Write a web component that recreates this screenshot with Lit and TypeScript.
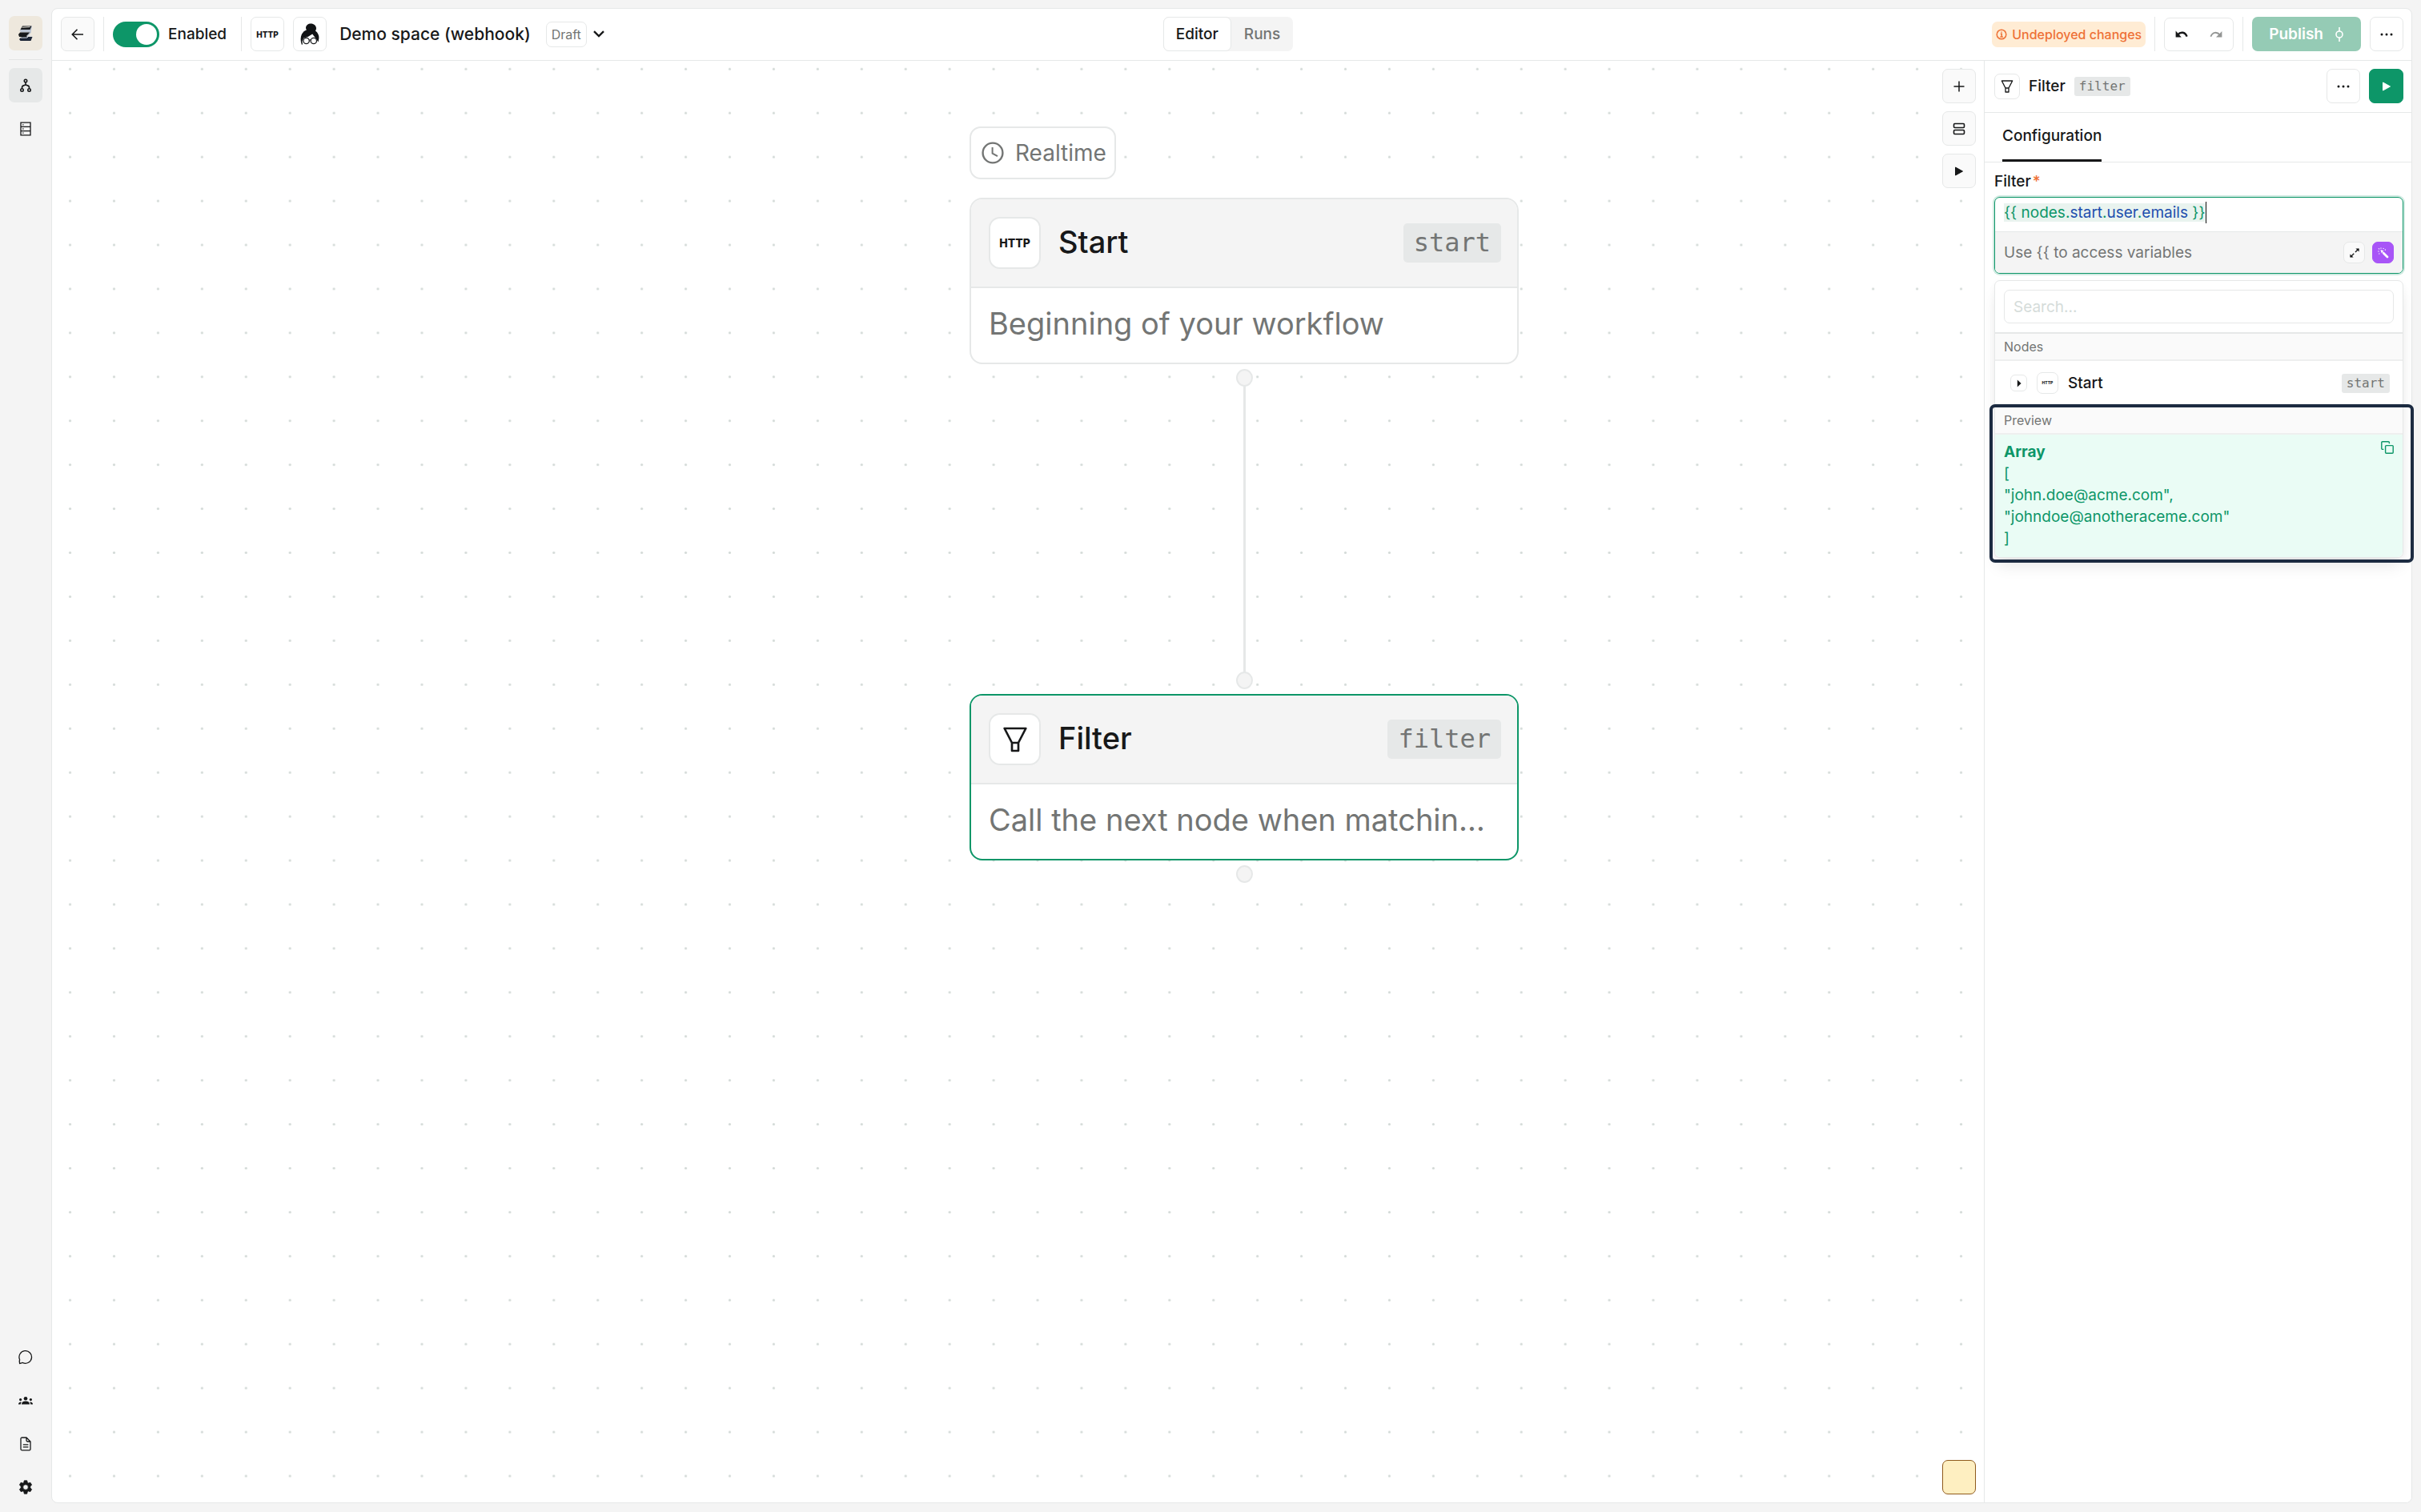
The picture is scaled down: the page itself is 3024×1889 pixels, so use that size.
import { LitElement, html, svg, css, TemplateResult } from "lit";
import { customElement, property, state } from "lit/decorators.js";
import { classMap } from "lit/directives/class-map.js";

/* ---------- icons ---------- */

const draw = (w: number, h: number, body: TemplateResult) => html`
  <svg width=${w} height=${h} viewBox="0 0 ${w} ${h}" fill="none" stroke="currentColor" aria-hidden="true">${body}</svg>
`;

const icons = {
  logo: () => draw(18, 20, svg`<g stroke="none">
    <path d="M5 1 17 0.5 15.5 8.5H3.5L1.5 6.5Z" fill="#b9c3d2"/>
    <path d="M5 0.5H16.5L14.5 5H2.5Z" fill="#17191c"/>
    <path d="M4.5 2.2 14.5 1.6" stroke="#e8e4da" stroke-width="1"/>
    <path d="M2 8.5H15L10.5 14H1L0 11Z" fill="#17191c"/>
    <path d="M10.5 13.5 15.5 8" stroke="#b9c3d2" stroke-width="1.2"/>
    <path d="M4 14H17.5L15.5 19H2.5L1 17Z" fill="#1c2536"/>
    <path d="M3 15.2 11 15 12.5 13.2 17 13" stroke="#d8dce2" stroke-width="1"/></g>`),
  branch: () => draw(14, 18, svg`<g stroke-width="1.6">
    <circle cx="7" cy="3" r="1.7"/><circle cx="2.5" cy="14.5" r="1.7"/><circle cx="11.5" cy="14.5" r="1.7"/>
    <path d="M7 5v3M2.5 12.5v-1Q2.5 9 5 8.6L7 8 9 8.6Q11.5 9 11.5 11.5v1"/></g>`),
  server: () => draw(14, 18, svg`<g stroke-width="1.3">
    <path d="M1 1.2H13V16.8H1ZM1 6.4H13M1 11.6H13"/><path d="M3.2 3.8h1.3M3.2 9h1.3M3.2 14.2h1.3"/></g>`),
  chat: () => draw(18, 18, svg`<path stroke-width="1.3" d="M1.6 16.4 1.2 13.2 Q1.8 12.4 1.5 11.4 A7.8 7.8 0 1 1 5.6 15.6 Q4.6 15.2 4 15.8 Z"/>`),
  people: () => draw(20, 12, svg`<g fill="currentColor" stroke="none">
    <circle cx="10" cy="3.2" r="2.3"/><circle cx="3.6" cy="4.6" r="1.6"/><circle cx="16.4" cy="4.6" r="1.6"/>
    <path d="M5 10.5Q5 6.6 10 6.6T15 10.5ZM1 10.5Q0.9 7.6 4.4 7.4L4.6 8Q3.8 9 3.8 10.5ZM19 10.5Q19.1 7.6 15.6 7.4L15.4 8Q16.2 9 16.2 10.5Z"/></g>`),
  file: () => draw(14, 18, svg`<g stroke-width="1.3">
    <path d="M2.6 1H8L13 6V15.4Q13 16.8 11.6 16.8H2.6Q1 16.8 1 15.2V2.6Q1 1 2.6 1ZM8 1V4.6Q8 6 9.4 6H13M3.8 9.8h6.6M3.8 12.8h6.6"/></g>`),
  gear: () => draw(18, 18, svg`<path fill="currentColor" stroke="currentColor" stroke-width="0.8" stroke-linejoin="round" fill-rule="evenodd" d="M7.3 0.8h3.4l.6 2.4 1.2.7 2.4-.7 1.7 2.9-1.8 1.8v2l1.8 1.8-1.7 2.9-2.4-.7-1.2.7-.6 2.6H7.3l-.6-2.6-1.2-.7-2.4.7L1.4 11.7l1.8-1.8V7.9L1.4 6.1l1.7-2.9 2.4.7 1.2-.7ZM9 5.7a3.3 3.3 0 1 0 0 6.6 3.3 3.3 0 0 0 0-6.6Z"/>`),
  back: () => draw(16, 14, svg`<path stroke-width="1.6" d="M1.5 7H15M7.5 0.8 1.3 7l6.2 6.2"/>`),
  chevron: () => draw(14, 9, svg`<path stroke-width="2.4" d="M1 1.2 7 7 13 1.2"/>`),
  persona: () => draw(24, 28, svg`<g>
    <path fill="#111315" stroke="none" d="M7 6C7 2.4 10 .4 13.4.4S20.2 2.8 20 6.6Q20 8.2 19 9.4C22.4 12 23.6 15.4 23.4 18.6L22.6 23.4Q19.4 18.6 15.2 13.4 10.6 17.2 4.4 18.4L2.4 22.6 3 26.6 1.8 26.8C.2 22 .2 17 2 13.4Q4 9.6 8 8.2 7 7.4 7 6Z"/>
    <g stroke="#1c1e20" stroke-width="1.3" fill="#fff"><circle cx="7.6" cy="22" r="3.7"/><circle cx="16.8" cy="22" r="3.7"/><path d="M11.2 21.4Q12.2 20.4 13.2 21.4"/></g></g>`),
  info: () => draw(14, 14, svg`<g stroke-width="1.5"><circle cx="7" cy="7" r="5.8"/><path d="M5.8 6.2H7.2V10M5.4 10H8.8M7 3.6v1.2"/></g>`),
  undo: () => draw(16, 10, svg`<g><path stroke-width="2.4" d="M3 5.6Q6 2.2 9.4 2.8 13 3.4 14.6 7.6"/><path fill="currentColor" stroke="none" d="M0.6 0.6V8.6H7.8Z"/></g>`),
  redo: () => draw(16, 10, svg`<g><path stroke-width="1.8" d="M13 5.6Q10 2.4 6.6 2.8 3 3.2 1.4 7.8"/><path fill="currentColor" stroke="none" d="M15.4 1V8.6H8Z"/></g>`),
  commit: () => draw(12, 20, svg`<g stroke-width="1.6"><circle cx="6" cy="10" r="4"/><path d="M6 1V6M6 14V19"/></g>`),
  dots: () => draw(16, 4, svg`<g fill="currentColor" stroke="none"><circle cx="2" cy="2" r="1.5"/><circle cx="8" cy="2" r="1.5"/><circle cx="14" cy="2" r="1.5"/></g>`),
  plus: () => draw(14, 14, svg`<path stroke-width="1.5" d="M7 .5V13.5M.5 7H13.5"/>`),
  rows: () => draw(16, 16, svg`<g stroke-width="1.6"><rect x="1.5" y="1.5" width="13" height="5" rx="1.2"/><rect x="1.5" y="9.5" width="13" height="5" rx="1.2"/></g>`),
  play: () => draw(12, 12, svg`<path fill="currentColor" stroke-width="1" stroke-linejoin="round" d="M1.5 1 10.5 6 1.5 11Z"/>`),
  playSmall: () => draw(6, 10, svg`<path fill="currentColor" stroke="none" d="M.8 0.5 5.6 5 .8 9.5Z"/>`),
  clock: () => draw(28, 28, svg`<g><circle cx="14" cy="14" r="12.4" stroke-width="2.4"/><path stroke-width="2" d="M13.6 7V14.6L20 18.2"/></g>`),
  expand: () => draw(12, 12, svg`<g><path stroke-width="1.3" stroke-dasharray="6 2.4" d="M1 11 11 1"/><path fill="currentColor" stroke="none" d="M7.4.6H11.6V4.6ZM.4 7.6V11.6H4.6Z"/></g>`),
  wand: () => draw(14, 14, svg`<g><path stroke-width="2.8" stroke-linecap="round" d="M7.2 7.2 12 12"/>
    <path fill="currentColor" stroke="none" d="M3.4 3 7.4 4.2 4.8 7.4Z"/>
    <path stroke-width="1.2" d="M4 .4v1.4M.2 5h1.4M1 1.4l1 1M7.4 1 6.8 2M1.4 8.4l.9-.8M8.8 3.2h1.2"/></g>`),
  copy: () => draw(16, 16, svg`<g stroke-width="1.4"><rect x="5.6" y="5.6" width="9.6" height="9.6" rx="1"/><path d="M3.4 10.4H2Q.8 10.4.8 9.2V2Q.8.8 2 .8H9.2Q10.4.8 10.4 2V3.2"/></g>`),
};

const funnel = (size: number) => html`
  <svg width=${size} height=${size} viewBox="0 0 24 24" fill="none" stroke="currentColor" stroke-width="2" stroke-linejoin="round" aria-hidden="true">
    <path d="M2 1.5H22L15 15V22.5H9V15ZM9 15H15" />
  </svg>
`;

/* ---------- shared styles ---------- */

const base = css`
  :host {
    --line: #e6e8e8;
    --ink: #171819;
    --muted: #737574;
    --soft: #f4f4f4;
    --pale: #fafafa;
    --green: #0d9668;
    font-family: Inter, "Liberation Sans", sans-serif;
    font-size: 19px;
    line-height: 27px;
    font-weight: 500;
    color: var(--ink);
  }
  *,
  *::before,
  *::after {
    box-sizing: border-box;
  }
  svg {
    display: block;
    flex: none;
  }
  button {
    font: inherit;
    color: inherit;
    padding: 0;
    margin: 0;
    border: 0;
    background: none;
    cursor: pointer;
  }
  .btn {
    display: flex;
    align-items: center;
    justify-content: center;
    width: 42px;
    height: 43px;
    border: 1px solid var(--line);
    border-radius: 7px;
    background: #fff;
    flex: none;
  }
  .btn.pale {
    background: var(--pale);
  }
  .tag {
    font-family: "DejaVu Sans Mono", "Liberation Mono", monospace;
    font-weight: 400;
    font-size: 16px;
    line-height: 24px;
    padding: 0 6px;
    border-radius: 3px;
    background: #e6e8e8;
    color: var(--muted);
  }
  .http {
    font-weight: 800;
    font-size: 10px;
    line-height: 1;
  }
`;

/* ---------- left rail ---------- */

@customElement("side-rail")
export class SideRail extends LitElement {
  static styles = [
    base,
    css`
      :host {
        display: flex;
        flex: none;
        width: 64px;
      }
      nav {
        display: flex;
        flex-direction: column;
        justify-content: space-between;
        flex: 1;
        padding: 20px 11px 10px;
      }
      .group {
        display: flex;
        flex-direction: column;
        gap: 11px;
      }
      .item {
        display: flex;
        align-items: center;
        justify-content: center;
        width: 42px;
        height: 43px;
        border-radius: 7px;
      }
      .item.active {
        background: #e6e8e8;
      }
      .item.logo {
        background: #eee8dd;
      }
      .rule {
        height: 1px;
        background: #e3e5e5;
        margin-bottom: -1px;
      }
    `,
  ];

  render() {
    const lower = [
      ["Chat", icons.chat],
      ["Team", icons.people],
      ["Documents", icons.file],
      ["Settings", icons.gear],
    ] as const;
    return html`
      <nav aria-label="Main">
        <div class="group">
          <button class="item logo" aria-label="Home">${icons.logo()}</button>
          <div class="rule"></div>
          <button class="item active" aria-label="Workflows">${icons.branch()}</button>
          <button class="item" aria-label="Storage">${icons.server()}</button>
        </div>
        <div class="group">
          ${lower.map(([label, icon]) => html`<button class="item" aria-label=${label}>${icon()}</button>`)}
        </div>
      </nav>
    `;
  }
}

/* ---------- header ---------- */

@customElement("top-bar")
export class TopBar extends LitElement {
  @state() private tab = "Editor";

  static styles = [
    base,
    css`
      :host {
        display: block;
        flex: none;
      }
      header {
        display: grid;
        grid-template-columns: 1fr auto 1fr;
        align-items: center;
        padding: 10px 10px 11px 11px;
        border-bottom: 1px solid var(--line);
      }
      .side {
        display: flex;
        align-items: center;
        gap: 11px;
      }
      .side.end {
        justify-content: flex-end;
      }
      .rule {
        width: 1px;
        height: 43px;
        background: var(--line);
      }
      .switch {
        display: flex;
        align-items: center;
        gap: 11px;
        padding-right: 7px;
      }
      .switch input {
        appearance: none;
        margin: 0;
        width: 58px;
        height: 32px;
        padding: 3px;
        border-radius: 16px;
        background: #c9cccb;
        display: flex;
      }
      .switch input::before {
        content: "";
        width: 26px;
        height: 26px;
        border-radius: 50%;
        background: #fff;
      }
      .switch input:checked {
        background: var(--green);
        justify-content: flex-end;
      }
      .title {
        margin: 0;
        padding: 0 8px 0 5px;
        font-size: 21px;
        font-weight: 500;
        line-height: 27px;
      }
      .draft {
        padding: 0 6px;
        border: 1px solid var(--line);
        border-radius: 7px;
        font-size: 16px;
        line-height: 30px;
        font-weight: 400;
        color: var(--muted);
      }
      .caret {
        padding: 4px 0;
        margin-left: -3px;
      }
      .tabs {
        display: flex;
        margin-right: 10px;
        border-radius: 7px;
        background: var(--soft);
      }
      .tabs button {
        height: 43px;
        padding: 0 15px;
        border: 1px solid transparent;
        border-radius: 7px;
        color: var(--muted);
      }
      .tabs button.on {
        background: #fff;
        border-color: var(--line);
        color: var(--ink);
      }
      .warn {
        display: flex;
        align-items: center;
        gap: 6px;
        padding: 0 5px;
        border-radius: 7px;
        background: #ffecd4;
        color: #ee7136;
        font-size: 16px;
        line-height: 32px;
      }
      .history {
        display: flex;
        align-items: center;
        height: 42px;
        width: 87px;
        border: 1px solid var(--line);
        border-radius: 7px;
      }
      .history button {
        display: flex;
        flex: 1;
        justify-content: center;
        padding: 12px 0;
      }
      .history .off {
        color: #939594;
      }
      .publish {
        display: flex;
        align-items: center;
        gap: 14px;
        height: 43px;
        padding: 0 21px;
        border-radius: 7px;
        background: #95cbb5;
        color: #fff;
        font-weight: 600;
      }
    `,
  ];

  render() {
    return html`
      <header>
        <div class="side">
          <button class="btn pale" aria-label="Back">${icons.back()}</button>
          <span class="rule"></span>
          <label class="switch"><input type="checkbox" role="switch" checked />Enabled</label>
          <span class="rule"></span>
          <span class="btn"><span class="http">HTTP</span></span>
          <span class="btn">${icons.persona()}</span>
          <h1 class="title">Demo space (webhook)</h1>
          <span class="draft">Draft</span>
          <button class="caret" aria-label="Choose version">${icons.chevron()}</button>
        </div>
        <div class="tabs" role="tablist">
          ${["Editor", "Runs"].map(
            (t) => html`<button
              role="tab"
              aria-selected=${this.tab === t}
              class=${classMap({ on: this.tab === t })}
              @click=${() => (this.tab = t)}
            >${t}</button>`
          )}
        </div>
        <div class="side end">
          <span class="warn">${icons.info()}Undeployed changes</span>
          <span class="rule"></span>
          <div class="history">
            <button aria-label="Undo">${icons.undo()}</button>
            <button class="off" aria-label="Redo">${icons.redo()}</button>
          </div>
          <span class="rule"></span>
          <button class="publish">Publish${icons.commit()}</button>
          <button class="btn" aria-label="More">${icons.dots()}</button>
        </div>
      </header>
    `;
  }
}

/* ---------- canvas ---------- */

@customElement("flow-node")
export class FlowNode extends LitElement {
  @property() heading = "";
  @property() slug = "";
  @property() text = "";
  @property() kind = "http";
  @property({ type: Boolean }) selected = false;

  static styles = [
    base,
    css`
      :host {
        display: block;
      }
      article {
        border: 2px solid var(--line);
        border-radius: 16px;
        background: #fff;
        overflow: hidden;
      }
      article.selected {
        border-color: var(--green);
      }
      .head {
        display: flex;
        align-items: center;
        gap: 22px;
        padding: 22px 20px 22px 22px;
        background: var(--soft);
        border-bottom: 2px solid var(--line);
      }
      .box {
        display: flex;
        align-items: center;
        justify-content: center;
        width: 65px;
        height: 65px;
        border: 2px solid var(--line);
        border-radius: 14px;
        background: #fff;
      }
      .box .http {
        font-size: 14px;
      }
      h2 {
        flex: 1;
        margin: 0;
        padding-bottom: 4px;
        font-size: 38px;
        line-height: 54px;
        font-weight: 500;
      }
      .slug {
        font-size: 32px;
        line-height: 49px;
        padding: 0 13px;
        border-radius: 5px;
      }
      p {
        margin: 0;
        padding: 17px 22px 22px;
        font-size: 38px;
        line-height: 54px;
        font-weight: 400;
        color: var(--muted);
      }
    `,
  ];

  render() {
    return html`
      <article class=${classMap({ selected: this.selected })}>
        <div class="head">
          <span class="box">${this.kind === "http" ? html`<span class="http">HTTP</span>` : funnel(32)}</span>
          <h2>${this.heading}</h2>
          <code class="tag slug">${this.slug}</code>
        </div>
        <p>${this.text}</p>
      </article>
    `;
  }
}

@customElement("flow-canvas")
export class FlowCanvas extends LitElement {
  static styles = [
    base,
    css`
      :host {
        display: flex;
        flex: 1;
        position: relative;
        overflow: hidden;
        min-width: 0;
      }
      .grid {
        position: absolute;
        inset: 0;
        width: 100%;
        height: 100%;
      }
      .realtime,
      .node,
      .edge,
      .port {
        position: absolute;
      }
      .realtime {
        left: 1146px;
        top: 82px;
        display: flex;
        align-items: center;
        gap: 14px;
        padding: 4px 10px 4px 13px;
        border: 2px solid var(--line);
        border-radius: 14px;
        background: #fff;
        color: var(--muted);
        font-size: 28px;
        line-height: 54px;
        font-weight: 400;
      }
      .node {
        left: 1146px;
        width: 686px;
      }
      .node.start {
        top: 171px;
      }
      .node.filter {
        top: 791px;
      }
      .edge {
        left: 1488px;
        top: 406px;
        width: 3px;
        height: 358px;
        background: var(--line);
      }
      .port {
        left: 1479px;
        width: 21px;
        height: 22px;
        border: 2px solid var(--line);
        border-radius: 50%;
        background: var(--soft);
      }
      .port.a {
        top: 385px;
      }
      .port.b {
        top: 763px;
      }
      .port.c {
        top: 1005px;
      }
      .tools {
        position: relative;
        display: flex;
        flex-direction: column;
        gap: 10px;
        margin-left: auto;
        padding: 10px;
      }
      .tools .note {
        margin-top: auto;
        background: #feefc1;
        border-color: #8f5a1c;
      }
    `,
  ];

  render() {
    return html`
      <svg class="grid" aria-hidden="true">
        <defs>
          <pattern id="dots" width="54.93" height="54.93" patternUnits="userSpaceOnUse" x="-4.9" y="-17.2">
            <circle cx="27.46" cy="27.46" r="1.6" fill="#d3dad7" />
          </pattern>
        </defs>
        <rect width="100%" height="100%" fill="url(#dots)" />
      </svg>
      <div class="realtime">${icons.clock()}Realtime</div>
      <flow-node class="node start" heading="Start" slug="start" kind="http" text="Beginning of your workflow"></flow-node>
      <flow-node
        class="node filter"
        heading="Filter"
        slug="filter"
        kind="filter"
        text="Call the next node when matchin…"
        selected
      ></flow-node>
      <span class="edge"></span>
      <span class="port a"></span>
      <span class="port b"></span>
      <span class="port c"></span>
      <div class="tools">
        <button class="btn pale" aria-label="Add node">${icons.plus()}</button>
        <button class="btn pale" aria-label="Arrange">${icons.rows()}</button>
        <button class="btn pale" aria-label="Run">${icons.play()}</button>
        <button class="btn note" aria-label="Add note"></button>
      </div>
    `;
  }
}

/* ---------- right panel ---------- */

@customElement("config-panel")
export class ConfigPanel extends LitElement {
  static styles = [
    base,
    css`
      :host {
        display: block;
        flex: none;
        width: 534px;
        border-left: 1px solid var(--line);
        background: #fff;
      }
      .head {
        display: flex;
        align-items: center;
        gap: 11px;
        padding: 10px 10px 11px 12px;
        border-bottom: 1px solid var(--line);
      }
      .head .icon {
        width: 32px;
        height: 32px;
      }
      h2 {
        margin: 0;
        font-size: 19px;
        font-weight: 500;
      }
      .end {
        display: flex;
        gap: 11px;
        margin-left: auto;
      }
      .run {
        background: var(--green);
        border-color: var(--green);
        color: #fff;
        width: 43px;
      }
      .tabs {
        display: flex;
        padding: 0 22px;
        border-bottom: 1px solid var(--line);
      }
      .tabs button {
        padding: 15px 0 16px;
        border-bottom: 3px solid var(--ink);
      }
      .body {
        padding: 10px 10px 10px 12px;
      }
      .label {
        display: block;
        margin-bottom: 6px;
      }
      .label em {
        font-style: normal;
        color: #ee7136;
        margin-left: 2px;
      }
      .field {
        border: 1px solid var(--green);
        border-radius: 7px;
        box-shadow: 0 0 0 2px #0d966833;
        overflow: hidden;
      }
      .code {
        padding: 5px 11px 10px;
        font-weight: 400;
        color: var(--green);
        outline: none;
        border-bottom: 1px solid var(--line);
      }
      .code .expr {
        background: #e9f3ef;
      }
      .code b {
        font-weight: 400;
        color: #1d4fae;
      }
      .code .cursor {
        display: inline-block;
        width: 1px;
        height: 27px;
        background: #111;
        vertical-align: top;
      }
      .hint {
        display: flex;
        align-items: center;
        gap: 9px;
        padding: 12px 11px;
        background: var(--soft);
        color: var(--muted);
        font-weight: 400;
      }
      .hint span {
        margin-right: auto;
      }
      .mini {
        width: 27px;
        height: 27px;
      }
      .hint .mini {
        color: var(--ink);
      }
      .hint .mini.magic {
        background: #a855f7;
        border-color: #a855f7;
        color: #fff;
      }
      .pop {
        margin-top: 8px;
        border: 1px solid var(--line);
        border-radius: 7px;
        box-shadow: 0 13px 20px -4px #0000001a, 0 2px 8px #00000008;
        background: #fff;
      }
      .search {
        padding: 11px;
        border-bottom: 2px solid var(--line);
      }
      .search input {
        display: block;
        width: 100%;
        height: 42px;
        padding: 0 11px;
        border: 1px solid var(--line);
        border-radius: 7px;
        font: inherit;
        font-weight: 400;
        outline: none;
      }
      .search input::placeholder {
        color: #d5dcda;
        opacity: 1;
      }
      .band {
        margin: 0;
        padding: 0 11px;
        font-size: 16px;
        line-height: 32px;
        font-weight: 400;
        color: var(--muted);
        background: var(--pale);
        border-bottom: 2px solid #eeefef;
      }
      .row {
        display: flex;
        align-items: center;
        padding: 14px 16px 17px 19px;
        gap: 12px;
      }
      .row .open {
        width: 21px;
        height: 21px;
        border-radius: 6px;
      }
      .row .http {
        font-size: 5px;
      }
      .row .tag {
        margin-left: auto;
      }
      .preview {
        position: relative;
      }
      .preview::after {
        content: "";
        position: absolute;
        inset: -4px -14px -7px -7px;
        border: 4px solid #1c2b41;
        border-radius: 7px;
        pointer-events: none;
      }
      .value {
        display: flex;
        justify-content: space-between;
        align-items: flex-start;
        padding: 8px 11px 10px;
        border-radius: 0 0 7px 7px;
        background: #eafcf5;
        color: var(--green);
      }
      .value pre {
        margin: 0;
        font: inherit;
        font-weight: 400;
      }
      .value strong {
        font-weight: 700;
      }
    `,
  ];

  private get value() {
    return ["[", '"john.doe@acme.com",', '"johndoe@anotheraceme.com"', "]"].join("\n");
  }

  render() {
    return html`
      <div class="head">
        <span class="btn icon">${funnel(16)}</span>
        <h2>Filter</h2>
        <code class="tag">filter</code>
        <div class="end">
          <button class="btn" aria-label="More">${icons.dots()}</button>
          <button class="btn run" aria-label="Run node">${icons.play()}</button>
        </div>
      </div>
      <div class="tabs" role="tablist">
        <button role="tab" aria-selected="true">Configuration</button>
      </div>
      <div class="body">
        <span class="label" id="filter-label">Filter<em>*</em></span>
        <div class="field">
          <div class="code" role="textbox" contenteditable="true" spellcheck="false" aria-labelledby="filter-label"><span class="expr">{{ nodes.<b>start</b>.<b>user</b>.<b>emails</b> }}</span><span class="cursor"></span></div>
          <div class="hint">
            <span>Use {{ to access variables</span>
            <button class="btn mini pale" aria-label="Expand">${icons.expand()}</button>
            <button class="btn mini magic" aria-label="Generate">${icons.wand()}</button>
          </div>
        </div>
        <div class="pop">
          <div class="search"><input type="search" placeholder="Search..." aria-label="Search" /></div>
          <h3 class="band">Nodes</h3>
          <div class="row">
            <button class="btn open" aria-label="Show fields">${icons.playSmall()}</button>
            <span class="btn mini"><span class="http">HTTP</span></span>
            <span>Start</span>
            <code class="tag">start</code>
          </div>
          <section class="preview">
            <h3 class="band">Preview</h3>
            <div class="value">
              <div><strong>Array</strong><pre>${this.value}</pre></div>
              <button aria-label="Copy">${icons.copy()}</button>
            </div>
          </section>
        </div>
      </div>
    `;
  }
}

/* ---------- shell ---------- */

@customElement("app-root")
export class AppRoot extends LitElement {
  static styles = [
    base,
    css`
      :host {
        display: flex;
        min-height: 100vh;
        background: var(--soft);
      }
      main {
        display: flex;
        flex-direction: column;
        flex: 1;
        min-width: 0;
        margin: 10px 11px 11px 0;
        border: 1px solid var(--line);
        border-radius: 8px;
        background: #fff;
      }
      .work {
        display: flex;
        flex: 1;
      }
      .panel {
        border-bottom-right-radius: 7px;
      }
    `,
  ];

  render() {
    return html`
      <side-rail></side-rail>
      <main>
        <top-bar></top-bar>
        <div class="work">
          <flow-canvas></flow-canvas>
          <config-panel class="panel"></config-panel>
        </div>
      </main>
    `;
  }
}
